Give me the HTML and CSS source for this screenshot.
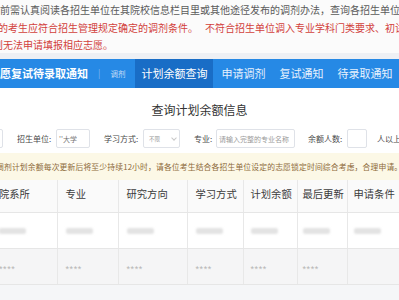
FILE: index.html
```html
<!DOCTYPE html>
<html lang="zh-CN">
<head>
<meta charset="utf-8">
<title>查询计划余额信息</title>
<link rel="stylesheet" href="styles.css">
</head>
<body>
<div class="intro">
  <p class="line gray l1">调剂前需认真阅读各招生单位在其院校信息栏目里或其他途径发布的调剂办法，查询各招生单位</p>
  <p class="line red l2">的考生应符合招生管理规定确定的调剂条件。<span class="sp"></span>不符合招生单位调入专业学科门类要求、初试</p>
  <p class="line red l3">则无法申请填报相应志愿。</p>
</div>
<div class="band"></div>
<nav class="nav">
  <span class="brand">志愿复试待录取通知</span>
  <span class="sep">|</span>
  <span class="sub">调剂</span>
  <a class="item active">计划余额查询</a>
  <a class="item">申请调剂</a>
  <a class="item">复试通知</a>
  <a class="item">待录取通知</a>
</nav>
<main class="card">
  <h2 class="title">查询计划余额信息</h2>
  <div class="filters">
    <span class="box ghost"></span>
    <label class="lab w39 ml14">招生单位:</label>
    <span class="box w34"><span class="ph dark">''大学</span></span>
    <label class="lab w39 ml14">学习方式:</label>
    <span class="box sel w37"><span class="ph small">不限</span><span class="chev"></span></span>
    <label class="lab w22 ml14">专业:</label>
    <span class="box w79"><span class="ph">请输入完整的专业名称</span></span>
    <label class="lab w39 ml13">余额人数:</label>
    <span class="box w20"></span>
    <label class="lab ml10">人以上</label>
  </div>
  <div class="alert">调剂计划余额每次更新后将至少持续12小时，请各位考生结合各招生单位设定的志愿锁定时间综合考虑，合理申请。</div>
  <table class="grid">
    <colgroup>
      <col class="c1"><col class="c2"><col class="c3"><col class="c4"><col class="c5"><col class="c6"><col class="c7">
    </colgroup>
    <thead>
      <tr><th>院系所</th><th>专业</th><th>研究方向</th><th>学习方式</th><th>计划余额</th><th>最后更新</th><th>申请条件</th></tr>
    </thead>
    <tbody>
      <tr class="r1">
        <td><span class="blur"></span></td><td><span class="blur"></span></td><td><span class="blur"></span></td><td><span class="blur"></span></td><td><span class="blur"></span></td><td><span class="blur"></span></td><td><span class="blur"></span></td>
      </tr>
      <tr class="r2">
        <td class="star">****</td><td class="star">****</td><td class="star">****</td><td class="star">****</td><td class="star">****</td><td class="star">****</td><td></td>
      </tr>
    </tbody>
  </table>
</main>
</body>
</html>
```
FILE: styles.css
```css
* { box-sizing: border-box; }
html, body {
  margin: 0;
  padding: 0;
}
body {
  width: 399px;
  height: 300px;
  overflow: hidden;
  background: #f5f6f8;
  font-family: "Noto Sans CJK SC", "Noto Sans", sans-serif;
  color: #333;
}
.intro {
  background: #fbfbfb;
  height: 53px;
  padding-top: 1px;
  overflow: hidden;
}
.line {
  margin: 0;
  font-size: 10px;
  line-height: 17.5px;
  white-space: nowrap;
}
.gray { color: #5a5a5a; }
.red { color: #d2403c; }
.l1 { margin-left: -20px; }
.l2 { margin-left: -2px; }
.l3 { margin-left: -7px; }
.sp { display: inline-block; width: 7px; }
.band {
  height: 6px;
  background: #eef0f4;
}
.nav {
  height: 29px;
  background: #2689e5;
  display: flex;
  align-items: stretch;
  white-space: nowrap;
}
.brand {
  margin-left: -11px;
  font-size: 11px;
  font-weight: bold;
  color: #fff;
  line-height: 29px;
}
.sep {
  margin-left: 10px;
  color: #7fb8ef;
  font-size: 9px;
  line-height: 29px;
}
.sub {
  margin-left: 10px;
  color: #c3dcf7;
  font-size: 7.5px;
  line-height: 29px;
}
.item {
  font-size: 11px;
  line-height: 29px;
  color: #e6f1fd;
  padding: 0 6px;
  margin-right: 2px;
}
.item.active {
  margin-left: 10px;
  background: #196dc6;
  color: #fff;
  margin-right: 2px;
}
.card {
  background: #fff;
  overflow: hidden;
}
.title {
  margin: 12px 0 0;
  text-align: center;
  font-size: 12px;
  font-weight: normal;
  line-height: 20px;
  color: #333;
}
.filters {
  margin-top: 9px;
  height: 19px;
  display: flex;
  align-items: center;
  white-space: nowrap;
}
.box {
  height: 19px;
  border: 1px solid #dfe2e8;
  border-radius: 2px;
  background: #fff;
  display: flex;
  align-items: center;
  padding-left: 2px;
  flex: none;
}
.ghost { width: 20px; margin-left: -17px; }
.lab {
  font-size: 8px;
  color: #4a4a4a;
  flex: none;
}
.w39 { width: 39px; }
.w22 { width: 22px; }
.w34 { width: 34px; }
.w37 { width: 37px; }
.w79 { width: 79px; }
.w20 { width: 20px; }
.ml14 { margin-left: 14px; }
.ml13 { margin-left: 13px; }
.ml10 { margin-left: 10px; }
.ph {
  font-size: 7px;
  color: #9a9a9a;
}
.ph.dark { color: #777; }
.ph.small { font-size: 5.5px; margin-left: 3px; }
.sel { position: relative; }
.chev {
  width: 4px;
  height: 4px;
  border-right: 1px solid #c8c8c8;
  border-bottom: 1px solid #c8c8c8;
  transform: rotate(45deg);
  margin-left: 12px;
  margin-top: -2px;
}
.alert {
  margin-top: 5px;
  margin-left: -4px;
  height: 27px;
  background: #fcf8e6;
  color: #8d6a3a;
  font-size: 7.8px;
  letter-spacing: 0.15px;
  line-height: 27px;
  white-space: nowrap;
}
.grid {
  margin-left: -9px;
  width: 426px;
  table-layout: fixed;
  border-collapse: collapse;
}
.c1 { width: 66px; }
.c2 { width: 61px; }
.c3 { width: 69px; }
.c4 { width: 56px; }
.c5 { width: 54px; }
.c6 { width: 50px; }
.c7 { width: 70px; }
.grid th, .grid td {
  border-right: 1px solid #e8e8e8;
  border-bottom: 1px solid #e6e6e6;
  text-align: left;
  padding: 0 0 0 8px;
  white-space: nowrap;
  overflow: hidden;
}
.grid th:nth-child(5), .grid td:nth-child(5) { padding-left: 7px; }
.grid th:nth-child(6), .grid td:nth-child(6) { padding-left: 5px; }
.grid th:nth-child(7), .grid td:nth-child(7) { padding-left: 6px; }
.grid th {
  height: 32px;
  background: #fafafa;
  font-size: 10.3px;
  font-weight: normal;
  color: #3c3c3c;
  padding-bottom: 4px;
}
.r1 td { height: 36px; background: #fff; }
.r2 td { height: 36px; background: #f5f5f6; }
.blur {
  display: block;
  width: 27px;
  height: 6px;
  margin-top: 1px;
  background: #e3e3e3;
  border-radius: 2px;
  filter: blur(0.8px);
}
.star {
  font-family: "Liberation Sans", sans-serif;
  font-size: 9px;
  color: #b5b5b5;
  letter-spacing: 0.6px;
  padding-top: 6px !important;
}
```
